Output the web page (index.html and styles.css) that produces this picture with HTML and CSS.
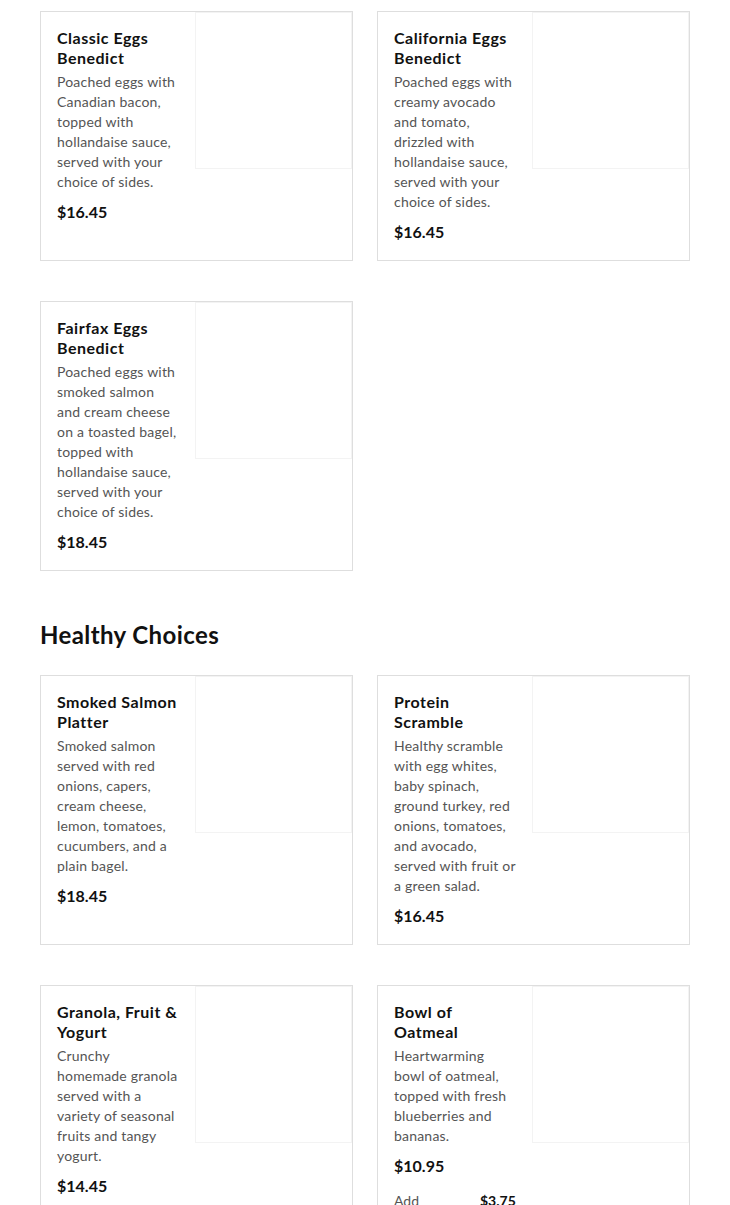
FILE: index.html
```html
<!DOCTYPE html>
<html lang="en">
<head>
<meta charset="utf-8">
<title>Menu</title>
<link rel="stylesheet" href="styles.css">
</head>
<body>
<main class="menu">
  <section class="section">
    <div class="grid">
      <article class="card">
        <div class="info">
          <h3 class="title">Classic Eggs Benedict</h3>
          <p class="desc">Poached eggs with Canadian bacon, topped with hollandaise sauce, served with your choice of sides.</p>
          <div class="price">$16.45</div>
        </div>
        <div class="photo"></div>
      </article>
      <article class="card">
        <div class="info">
          <h3 class="title">California Eggs Benedict</h3>
          <p class="desc">Poached eggs with creamy avocado and tomato, drizzled with hollandaise sauce, served with your choice of sides.</p>
          <div class="price">$16.45</div>
        </div>
        <div class="photo"></div>
      </article>
      <article class="card">
        <div class="info">
          <h3 class="title">Fairfax Eggs Benedict</h3>
          <p class="desc">Poached eggs with smoked salmon and cream cheese on a toasted bagel, topped with hollandaise sauce, served with your choice of sides.</p>
          <div class="price">$18.45</div>
        </div>
        <div class="photo"></div>
      </article>
    </div>
  </section>

  <section class="section">
    <h2 class="section-title">Healthy Choices</h2>
    <div class="grid">
      <article class="card">
        <div class="info">
          <h3 class="title">Smoked Salmon Platter</h3>
          <p class="desc">Smoked salmon served with red onions, capers, cream cheese, lemon, tomatoes, cucumbers, and a plain bagel.</p>
          <div class="price">$18.45</div>
        </div>
        <div class="photo"></div>
      </article>
      <article class="card">
        <div class="info">
          <h3 class="title">Protein Scramble</h3>
          <p class="desc">Healthy scramble with egg whites, baby spinach, ground turkey, red onions, tomatoes, and avocado, served with fruit or a green salad.</p>
          <div class="price">$16.45</div>
        </div>
        <div class="photo"></div>
      </article>
      <article class="card">
        <div class="info">
          <h3 class="title">Granola, Fruit &amp; Yogurt</h3>
          <p class="desc">Crunchy homemade granola served with a variety of seasonal fruits and tangy yogurt.</p>
          <div class="price">$14.45</div>
        </div>
        <div class="photo"></div>
      </article>
      <article class="card">
        <div class="info">
          <h3 class="title">Bowl of Oatmeal</h3>
          <p class="desc">Heartwarming bowl of oatmeal, topped with fresh blueberries and bananas.</p>
          <div class="price">$10.95</div>
          <ul class="addons">
            <li class="addon"><span class="addon-name">Add Blueberries</span><span class="addon-price">$3.75</span></li>
          </ul>
        </div>
        <div class="photo"></div>
      </article>
    </div>
  </section>
</main>
</body>
</html>
```

FILE: styles.css
```css
* { box-sizing: border-box; }

html, body {
  margin: 0;
  padding: 0;
  background: #ffffff;
}

body {
  font-family: Lato, "Liberation Sans", Arial, sans-serif;
  color: #111111;
}

.menu {
  padding: 11px 40px 40px;
}

.section-title {
  margin: 48px 0 24px;
  font-size: 24px;
  line-height: 32px;
  font-weight: 700;
  letter-spacing: 0.4px;
  color: #111111;
}

.grid {
  display: grid;
  grid-template-columns: 1fr 1fr;
  column-gap: 24px;
  row-gap: 40px;
}

.card {
  display: flex;
  align-items: flex-start;
  border: 1px solid #dedede;
  background: #ffffff;
}

.info {
  flex: 1 1 auto;
  min-width: 0;
  padding: 16px 15px 16px 16px;
}

.title {
  margin: 0 0 4px;
  font-size: 16px;
  line-height: 20px;
  font-weight: 700;
  letter-spacing: 0.5px;
  color: #111111;
}

.desc {
  margin: 0;
  font-size: 14px;
  line-height: 20px;
  letter-spacing: 0.2px;
  color: #555555;
}

.price {
  margin-top: 8px;
  font-size: 16px;
  line-height: 24px;
  font-weight: 700;
  color: #111111;
}

.addons {
  list-style: none;
  margin: 13px 0 0;
  padding: 0;
}

.addon {
  display: flex;
  gap: 6px;
  font-size: 14px;
  line-height: 20px;
}

.addon-name {
  width: 80px;
  color: #555555;
}

.addon-price {
  font-weight: 700;
  color: #111111;
}

.photo {
  flex: 0 0 157px;
  width: 157px;
  height: 157px;
  border: 1px solid #f3f3f3;
  background: #ffffff;
}
```
